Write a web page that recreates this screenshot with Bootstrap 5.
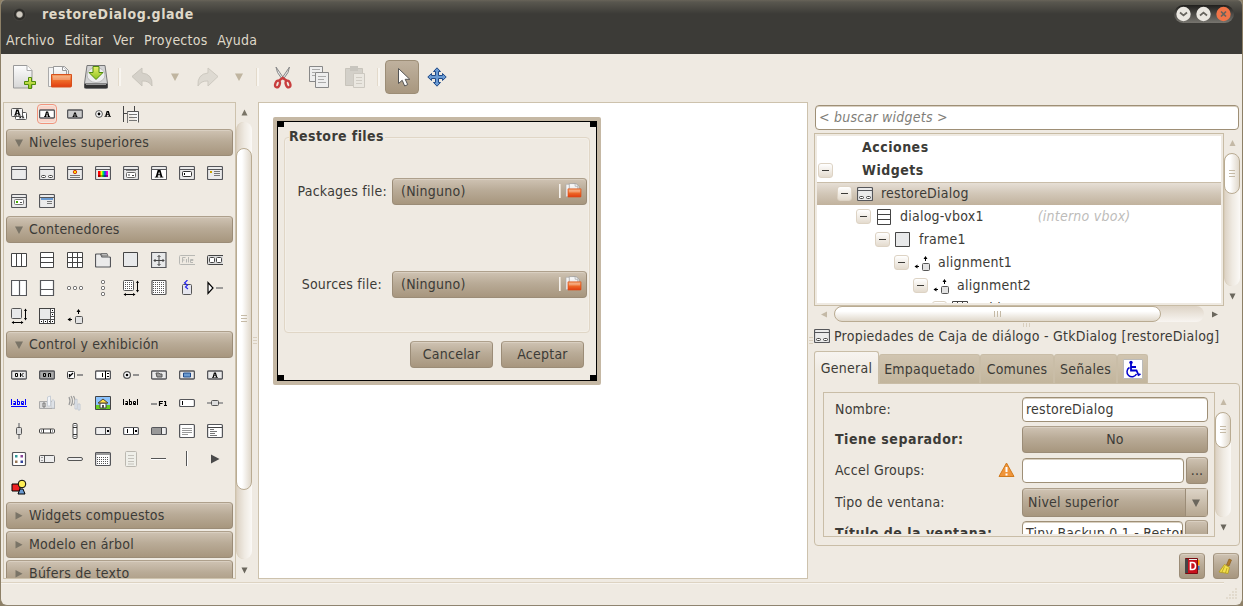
<!DOCTYPE html>
<html lang="es">
<head>
<meta charset="utf-8">
<title>restoreDialog.glade</title>
<link rel="stylesheet" href="https://cdn.jsdelivr.net/npm/bootstrap@5.3.0/dist/css/bootstrap.min.css">
<style>
:root{--bg:#efeae2;--ink:#3c3b37;--line:#cdc2ad;--soft:#e0d6c6}
html,body{height:606px;overflow:hidden}
body{background:#8d8067;font-family:"DejaVu Sans Condensed","DejaVu Sans",sans-serif;font-stretch:condensed;font-size:14px;line-height:20px;letter-spacing:.24px;color:var(--ink);white-space:nowrap}
svg{display:block;flex:none}
.fw-bold{letter-spacing:.5px}
.win{width:1243px;height:606px;background:var(--bg);border:1px solid #8d8067;border-top:0;border-bottom:1px solid #8f8470;border-radius:5px 5px 7px 7px;overflow:hidden}
.titlebar{height:28px;background:linear-gradient(#686459 0,#59574f 2px,#4b4943 8px,#3c3b37 14px);color:#dfd8c8;font-weight:700;letter-spacing:.56px;padding-left:12px}
.dot{width:13px;height:13px;border-radius:50%;background:radial-gradient(circle,#cfcac0 0 2.6px,#33322e 3.8px,#2c2b28 5px,#55534d 7px)}
.titlebar .name{margin-left:16px}
.winbtns{width:60px;height:18px;margin-right:8px;border-radius:9px;background:linear-gradient(#201f1d,#77756f)}
.menubar{height:26px;background:#3c3b37;color:#dfd8c8;padding:0 0 2px 5px;gap:9.8px}
.toolbar{height:48px;padding:0 0 2px 5px}
.tool{width:36px;height:36px}
.tsep{width:3px;height:18px;background:linear-gradient(90deg,#e3dacb 1px,#f8f5f0 1px)}
.tool.on{width:34px;height:34px;border:1px solid #9c8d76;border-radius:4px;background:linear-gradient(#bfb19e,#a8977f)}
.work{height:477px;padding-left:2px}
.palette{width:233px;height:477px;border:1px solid var(--line);overflow:hidden}
.group-head,.gbtn{background:linear-gradient(#cfc3b3,#b9ab97 45%,#a7967e);border:1px solid #9b8c77;border-top-color:#aea08c;border-radius:4px;box-shadow:inset 0 1px 0 #d9cfc1}
.group-head{height:27px;margin:0 2px 2px 2px;padding-left:8px}
.group-head svg{margin-right:6px}
.group-head span,.gtab,.lab,.ttext{padding-bottom:2px}
.icons{padding:1px 0 1px 1px}
.icons .cell{width:28px;height:28px}
.cell.sel i{outline:1px solid #f2937c;outline-offset:1px;background:#f9d5ca;border-radius:2px}
.sb{width:16px}
.trough{width:16px;border-radius:8px;background:linear-gradient(90deg,#ddd3c5,#efeae2 50%,#fbf9f6);border-left:1px solid #d8ccb9}
.thumb{width:16px;margin-left:-1px;border:1px solid #b9ab92;border-radius:8px;background:linear-gradient(90deg,#fff 35%,#e0d8cb)}
.canvas{width:550px;height:477px;border:1px solid var(--line);background:#fff;padding:14px}
.dlg{width:328px;height:268px;border:4px solid #c5b8a4;border-radius:2px;position:relative}
.dlgin{width:320px;height:260px;border:1px solid #000;background:var(--bg);padding:15px 0 0 6px}
.hnd{position:absolute;width:7px;height:6px;background:#000}
.gframe{width:306px;height:196px;border:1px solid var(--soft);border-radius:4px;padding:0 2px 0 0;box-shadow:inset 0 0 0 1px #f3efe8}
.legend-t{margin:-12px 0 0 4px;height:20px;line-height:20px;width:96px;background:var(--bg);font-weight:700;letter-spacing:.4px}
.flab{padding-bottom:2px}
.fbtn{width:195px;height:27px;padding:0 4px 2px 8px}
.fsep{width:2px;height:14px;background:linear-gradient(90deg,#fff,#d8cbb8);margin-right:4px}
.dbtn{width:83px;height:27px;padding-bottom:1px}
.side{width:427px;margin-left:4px}
.gentry{background:#fff;border:1px solid #9e8f76;border-radius:4px;box-shadow:inset 0 1px 0 #d9d0c1}
.search{height:25px;width:424px;margin:3px 0 0 2px;padding:1px 3px;color:#807e79;font-style:italic}
.treebox{width:410px;height:173px;border:1px solid #c8bca5;padding:2px;margin-left:1px}
.tree{height:167px;background:#fff;overflow:hidden}
.trow{height:23px;padding-left:1px}
.trow.cur{background:linear-gradient(#e8e1d8,#d2c7b8 50%,#c1b29d);box-shadow:inset 0 1px 0 #c9bda9}
.exp{width:15px;height:15px;border:1px solid #ddd3c4;border-radius:3px;background:linear-gradient(#fff,#e4dbce)}
.exp:after{content:"";display:block;width:7px;height:1px;margin:6px 3px;background:#3c3b37}
.ticon{width:16px;margin:0 8px 0 5px}
.htrough{width:370px;height:16px;border-radius:8px;background:linear-gradient(#ddd3c5,#f8f5f1)}
.hthumb{width:327px;height:16px;border:1px solid #b9ab92;border-radius:8px;background:linear-gradient(#fff 30%,#e0d8cb)}
.tabs{height:33px;margin-left:1px}
.gtab{height:30px;border:1px solid #c9bda7;border-bottom:0;border-radius:3px 3px 0 0;background:linear-gradient(#d0c4b0,#c2b59c)}
.gtab.act{height:33px;width:65px;padding-bottom:0;background:linear-gradient(#f7f4f0,#efeae2 60%);position:relative;z-index:1}
.book{width:426px;height:163px;margin:-1px 0 0 1px;border:1px solid #c9bda7;border-radius:0 4px 4px 4px;padding:8px 0 0 8px}
.propbox{width:392px;height:145px;border:1px solid #c9bda7;overflow:hidden}
.props{height:141px;overflow:hidden;padding:4px 0 0 11px}
.lab{width:187px}
.tb{width:26px;height:26px}
</style>
</head>
<body>
<svg width="0" height="0" class="position-absolute" aria-hidden="true">
<defs>
<linearGradient id="gp" x2="0" y2="1"><stop stop-color="#fdfdfd"/><stop offset="1" stop-color="#d6d6d6"/></linearGradient>
<linearGradient id="go" x2="0" y2="1"><stop stop-color="#f3a36a"/><stop offset=".5" stop-color="#ee6a28"/><stop offset="1" stop-color="#e03c10"/></linearGradient>
<linearGradient id="gg" x2="0" y2="1"><stop stop-color="#e8f06a"/><stop offset="1" stop-color="#8cc21c"/></linearGradient>
<linearGradient id="gr" x2="1" y2="0"><stop offset=".15" stop-color="#f00"/><stop offset=".35" stop-color="#ff0"/><stop offset=".5" stop-color="#0f4"/><stop offset=".7" stop-color="#04f"/><stop offset=".9" stop-color="#f0c"/></linearGradient>
<linearGradient id="gl" x2="0" y2="1"><stop stop-color="#000" stop-opacity=".25"/><stop offset="1" stop-color="#fff" stop-opacity=".6"/></linearGradient>
<pattern id="dots" width="2" height="2" patternUnits="userSpaceOnUse"><path fill="#555" d="M0 0h1v1H0z"/></pattern>
<g id="frm"><rect x=".5" y="1.5" width="15" height="13" rx="1" fill="#ebebeb" stroke="#55565a" stroke-width="1.2"/><path d="M1 4.500h14" stroke="#55565a"/></g>
<g id="btn"><rect x=".6" y="4" width="14.800" height="8" rx="1" fill="#eaeaea" stroke="#55565a" stroke-width="1.300"/></g>
<path id="bigA" d="M0 8V7h1l2-7h3l2 7h1v1H5V7h1L5.600 5.500H3.300L3 7h1v1zM3.600 4.500h1.800L4.500 1.500z" fill="#000" fill-rule="evenodd"/>
<symbol id="pg2" viewBox="0 0 16 16"><rect x="4.500" y="6.500" width="11" height="7" rx="1" fill="#fff" stroke="#555"/><use href="#bigA" transform="translate(8 7.500) scale(.6)"/><rect x=".5" y="2.500" width="11" height="8" rx="1" fill="#f4f4f4" stroke="#555"/><use href="#bigA" transform="translate(3 3.500) scale(.75)"/></symbol>
<symbol id="abtn" viewBox="0 0 16 16"><rect x=".6" y="4" width="14.800" height="8" rx="1" fill="#fff" stroke="#55565a" stroke-width="1.300"/><use href="#bigA" transform="translate(5 5.500) scale(.68)"/></symbol>
<symbol id="abtn2" viewBox="0 0 16 16"><rect x=".6" y="4" width="14.800" height="8" rx="1" fill="#ccc" stroke="#55565a" stroke-width="1.300"/><use href="#bigA" transform="translate(5.500 6.500) scale(.55)"/></symbol>
<symbol id="rad" viewBox="0 0 16 16"><circle cx="4" cy="8" r="3.400" fill="#fff" stroke="#555"/><circle cx="4" cy="8" r="1.400"/><use href="#bigA" transform="translate(9.500 5) scale(.72)"/></symbol>
<symbol id="tl" viewBox="0 0 16 18"><path d="M.5 1v16M11.500 1v5M0 8.500h4" stroke="#444" fill="none"/><path d="M4.500 6.500h11v11" fill="#f8f8f8" stroke="#555"/><path d="M4.500 6v12M6 9.500h8M6 12.500h8M6 15.500h8" stroke="#777"/></symbol>
<symbol id="w" viewBox="0 0 16 16"><use href="#frm"/></symbol>
<symbol id="wd" viewBox="0 0 16 16"><use href="#frm"/><rect x="2.500" y="10.500" width="4" height="2" rx="1" fill="#fff" stroke="#444"/><rect x="9.500" y="10.500" width="4" height="2" rx="1" fill="#fff" stroke="#444"/></symbol>
<symbol id="wa" viewBox="0 0 16 16"><use href="#frm"/><circle cx="8" cy="7" r="1.700" fill="#fd0" stroke="#d33a10"/><path d="M3 10.500h10M3 12.500h10" stroke="#777"/></symbol>
<symbol id="wc" viewBox="0 0 16 16"><use href="#frm"/><path d="M3 6h10v6H3z" fill="url(#gr)"/><path d="M3 10h10v2H3z" opacity=".35"/></symbol>
<symbol id="wf" viewBox="0 0 16 16"><use href="#frm"/><path d="M3 5.500h10" stroke="#888"/><rect x="3.500" y="7.500" width="9" height="5" rx="1" fill="#fff" stroke="#666"/><path d="M5 10h2M9 10.500h2" stroke="#444"/></symbol>
<symbol id="wA" viewBox="0 0 16 16"><use href="#frm"/><path d="M1 5h14v9H1z" fill="#fff"/><use href="#bigA" transform="translate(3.800 5) scale(.95)"/></symbol>
<symbol id="we" viewBox="0 0 16 16"><use href="#frm"/><rect x="3.500" y="6.500" width="9" height="5" rx="1" fill="#fff" stroke="#333"/><path d="M5.500 8v2" stroke="#000"/></symbol>
<symbol id="wl" viewBox="0 0 16 16"><use href="#frm"/><path d="M3 6h2v2H3z" fill="#c8a000"/><path d="M7 6.500h6M7 8.500h6M7 10.500h6" stroke="#777"/></symbol>
<symbol id="wg" viewBox="0 0 16 16"><use href="#frm"/><rect x="3.500" y="6.500" width="9" height="5" rx="1" fill="#fff" stroke="#777"/><path d="M5 8h2v2H5z" fill="#4a0"/><path d="M9 9.500h2" stroke="#555"/></symbol>
<symbol id="wb" viewBox="0 0 16 16"><use href="#frm"/><path d="M2 5h12v2H2z" fill="#6b9bd1"/><path d="M8 8.500h5M8 10.500h5" stroke="#777"/></symbol>
<symbol id="hb" viewBox="0 0 16 16"><path d="M.5 1.500h15v13H.5zM5.500 2v12M10.500 2v12" fill="#fff" stroke="#444"/></symbol>
<symbol id="vb" viewBox="0 0 16 16"><path d="M1.500.500h13v15h-13zM2 5.500h12M2 10.500h12" fill="#fff" stroke="#444"/></symbol>
<symbol id="tab" viewBox="0 0 16 16"><path d="M.5.500h15v15H.5zM5.500 1v14M10.500 1v14M1 5.500h14M1 10.500h14" fill="#fff" stroke="#444"/></symbol>
<symbol id="nb" viewBox="0 0 16 16"><path d="M.5 3q0-1 1-1h4l1.500 3h7.500q1 0 1 1v8q0 1-1 1h-13q-1 0-1-1z" fill="#ebebeb" stroke="#55565a" stroke-width="1.200"/><path d="M6 1.500h6l1 2.500H7z" fill="#bbb" stroke="#777"/></symbol>
<symbol id="fr" viewBox="0 0 16 16"><path d="M.5.500h14v14H.5z" fill="#e8e9ea" stroke="#444"/></symbol>
<symbol id="mv" viewBox="0 0 16 16"><path d="M.5.500h14.500v15H.5z" fill="#e8e9ea" stroke="#55565a" stroke-width="1.200"/><path d="M8 3.500v10M3 8.500h10M6.500 5L8 3.500 9.500 5M6.500 12L8 13.500 9.500 12M4.500 7L3 8.500 4.500 10M11.500 7L13 8.500 11.500 10" fill="none" stroke="#444"/></symbol>
<symbol id="file" viewBox="0 0 16 16"><path d="M16 3.500H1.500q-1 0-1 1v7q0 1 1 1H16M3.500 10.500v-5h3M3.500 8h2M7.500 7v3.500M9.500 5v5.500M11 8.500h3v-1h-2.500v3H14" fill="none" stroke="#b8b8b4"/></symbol>
<symbol id="bb" viewBox="0 0 16 16"><path d="M16 3.500H1.500q-1 0-1 1v7q0 1 1 1H16" fill="#ddd" stroke="#444"/><rect x="2.500" y="5.500" width="5" height="5" rx="1" fill="#fff" stroke="#444"/><rect x="9.500" y="5.500" width="5" height="5" rx="1" fill="#fff" stroke="#444"/></symbol>
<symbol id="hp" viewBox="0 0 16 16"><path d="M.5.500h15v15H.5zM8.500 1v14" fill="#fff" stroke="#55565a" stroke-width="1.200"/></symbol>
<symbol id="vp" viewBox="0 0 16 16"><path d="M1.500.500h13v15h-13zM2 9.500h12" fill="#fff" stroke="#55565a" stroke-width="1.200"/></symbol>
<symbol id="d3" viewBox="0 0 16 16"><g fill="#fff" stroke="#555"><rect x=".5" y="6.500" width="3" height="3" rx="1"/><rect x="6.500" y="6.500" width="3" height="3" rx="1"/><rect x="12.500" y="6.500" width="3" height="3" rx="1"/></g></symbol>
<symbol id="v3" viewBox="0 0 16 16"><g fill="#fff" stroke="#555"><rect x="6.500" y=".5" width="3" height="3" rx="1"/><rect x="6.500" y="6.500" width="3" height="3" rx="1"/><rect x="6.500" y="12.500" width="3" height="3" rx="1"/></g></symbol>
<g id="arr2"><path d="M14.500 1v10M1 14.500h11" stroke="#000"/><path d="M13 3h3l-1.500-2.500zM13 10h3l-1.500 2.500zM3 13v3L.5 14.500zM10 13v3l2.500-1.500z"/></g>
<symbol id="lay" viewBox="0 0 16 16"><rect x=".5" y=".5" width="10" height="10" rx="1" fill="#fff" stroke="#555"/><path d="M2 2h7v7H2z" fill="url(#dots)"/><use href="#arr2"/></symbol>
<symbol id="fix" viewBox="0 0 16 16"><rect x="1" y=".5" width="14" height="14" rx="1" fill="#fff" stroke="#555" stroke-width="1.200"/><path d="M2 2h12v12H2z" fill="url(#dots)"/></symbol>
<symbol id="evt" viewBox="0 0 16 16"><rect x="3.500" y="4.500" width="9" height="10" rx="1" fill="#e6e6ee" stroke="#555"/><path d="M8.500 0L5.500 3l3 2-2 2 2.500 2" fill="none" stroke="#22e" stroke-width="1.100"/></symbol>
<symbol id="xp" viewBox="0 0 16 16"><path d="M1 2.500v11l5-5.500z" fill="#fff" stroke="#000" stroke-width="1.200"/><path d="M9 8h7" stroke="#888" stroke-width="1.600"/></symbol>
<symbol id="vw" viewBox="0 0 16 16"><rect x=".5" y=".5" width="10" height="10" rx="1" fill="#e8e9ea" stroke="#555"/><use href="#arr2"/></symbol>
<symbol id="sw" viewBox="0 0 16 16"><rect x=".5" y=".5" width="15" height="15" fill="#fff" stroke="#444"/><path d="M1 1h10v10H1z" fill="#e8e9ea"/><path d="M11.500 1v14M1 11.500h14M4.500 12v3M8.500 12v3M12 4.500h3M12 8.500h3" stroke="#555"/><path d="M2 13h1v1H2zM6 13h1v1H6zM10 13h1v1h-1zM13 2h1v1h-1zM13 6h1v1h-1zM13 13h1v1h-1z"/></symbol>
<symbol id="al" viewBox="0 0 16 16"><rect x="8.500" y="8.500" width="7" height="7" rx="1" fill="#e2e2e2" stroke="#555"/><path d="M1 11.500h4M11.500 2v4" stroke="#000"/><path d="M9.500 4h4l-2-3zM3.500 9.500v4l-3-2z"/></symbol>
<symbol id="ok" viewBox="0 0 16 16"><use href="#btn"/><path d="M4.500 6.500h2v3h-2zM9.500 6v4M12.500 6l-2 2 2 2" fill="none" stroke="#000"/></symbol>
<symbol id="on" viewBox="0 0 16 16"><rect x=".6" y="4" width="14.800" height="8" rx="1" fill="#aaa" stroke="#55565a" stroke-width="1.300"/><path d="M4.500 6.500h2v3h-2zM9.500 10V6.500h2V10" fill="none" stroke="#000"/></symbol>
<symbol id="chk" viewBox="0 0 16 16"><rect x=".5" y="4.500" width="7" height="7" rx="1" fill="#fff" stroke="#444"/><path d="M2.500 7v2.500L6 6" fill="none" stroke="#000" stroke-width="1.300"/><path d="M10 8h6" stroke="#888" stroke-width="1.800"/></symbol>
<symbol id="spin" viewBox="0 0 16 16"><rect x=".6" y="4" width="14.800" height="8" rx="1" fill="#fff" stroke="#55565a" stroke-width="1.300"/><path d="M10.500 4v8M7.500 6v4" stroke="#000"/><path d="M12 6h2v1h-2zM12 9h2v1h-2z"/></symbol>
<symbol id="rb" viewBox="0 0 16 16"><circle cx="4" cy="8" r="3.400" fill="#fff" stroke="#555" stroke-width="1.200"/><circle cx="4" cy="8" r="1.300"/><path d="M10 8h6" stroke="#888" stroke-width="1.800"/></symbol>
<symbol id="fb" viewBox="0 0 16 16"><use href="#btn"/><path d="M5 6h3l1 1h2v3H6z" fill="#999" stroke="#555"/></symbol>
<symbol id="cb" viewBox="0 0 16 16"><use href="#btn"/><path d="M4.500 6h7v4h-7z" fill="#6b9bd1" stroke="#1d4a8c"/></symbol>
<symbol id="fnt" viewBox="0 0 16 16"><use href="#btn"/><use href="#bigA" transform="translate(5 5.500) scale(.65)"/></symbol>
<g id="lbl"><path d="M.5 4v6M2.500 6.500h2V10M4.500 8.500h-2v1h2M6.500 4v6M7 6.500h1.500v3H7M10 8.500h2.500v-2h-2v3h2.500M14.500 4v6" fill="none" stroke="currentColor"/></g>
<symbol id="lk" viewBox="0 0 16 16"><g color="#00f"><use href="#lbl"/><path d="M0 11.500h16" stroke="#00f"/></g></symbol>
<symbol id="lb" viewBox="0 0 16 16"><g color="#000"><use href="#lbl"/></g></symbol>
<symbol id="sc" viewBox="0 0 16 16"><path d="M.5 6.500h15v7H.5z" fill="#ddd" stroke="#aaa"/><path d="M4 8h2v4H4z" fill="none" stroke="#777"/><path d="M8.500 2l3-1v10h-3zM13 5h2v8h-2z" fill="#f3f5f8" stroke="#c8ced6"/></symbol>
<symbol id="vol" viewBox="0 0 16 16"><path d="M2 2q2 4 0 8M4 1q3 5 0 10M6.500 1q3 5 0 9" fill="none" stroke="#999" stroke-width="1.200"/><path d="M8 5l2-1v10H8zM11 9h2v6h-2z" fill="#e8ecf2" stroke="#c3c9d2"/></symbol>
<symbol id="img" viewBox="0 0 16 16"><path d="M.5 1.500h15v13H.5z" fill="#8cc4ff" stroke="#444"/><path d="M1 10h14v4H1z" fill="#6c2"/><path d="M5 8h6v5H5z" fill="#fff" stroke="#444"/><path d="M3 8l5-4 5 4z" fill="#fd4" stroke="#543"/><path d="M7 10h2v3H7z" fill="#555"/></symbol>
<symbol id="f1" viewBox="0 0 16 16"><path d="M0 9h6" stroke="#888" stroke-width="1.800"/><path d="M8.500 11V6.500H12M8.500 8.500h3M13 6.500h1.500V11M13 10.500h3" fill="none" stroke="#000" stroke-width="1.200"/></symbol>
<symbol id="ent" viewBox="0 0 16 16"><rect x=".6" y="4.500" width="14.800" height="7" rx="1" fill="#fff" stroke="#55565a" stroke-width="1.200"/><path d="M3.500 6v4" stroke="#000"/></symbol>
<symbol id="hs" viewBox="0 0 16 16"><path d="M0 8h16" stroke="#999" stroke-width="1.800"/><rect x="4.500" y="5.500" width="7" height="5" rx="1" fill="#ddd" stroke="#555"/></symbol>
<symbol id="vs" viewBox="0 0 16 16"><path d="M8 0v16" stroke="#999" stroke-width="1.800"/><rect x="5.500" y="4.500" width="5" height="7" rx="1" fill="#ddd" stroke="#555"/></symbol>
<symbol id="hsb" viewBox="0 0 16 16"><rect x=".5" y="6" width="15" height="4" rx="1" fill="#fff" stroke="#444"/><path d="M4.500 6v4M11.500 6v4M2 8h1M13 8h1" stroke="#333"/></symbol>
<symbol id="vsb" viewBox="0 0 16 16"><rect x="6" y=".5" width="4" height="15" rx="1" fill="#fff" stroke="#444"/><path d="M6 4.500h4M6 11.500h4M8 2v1M8 13v1" stroke="#333"/></symbol>
<symbol id="cmb" viewBox="0 0 16 16"><rect x=".6" y="4.500" width="14.800" height="7" rx="1" fill="#eee" stroke="#55565a" stroke-width="1.200"/><path d="M10.500 5v6" stroke="#444"/><path d="M12 7h2v2h-2z"/></symbol>
<symbol id="cme" viewBox="0 0 16 16"><rect x=".6" y="4.500" width="14.800" height="7" rx="1" fill="#fff" stroke="#55565a" stroke-width="1.200"/><path d="M10.500 5v6M4.500 6v4" stroke="#000"/><path d="M12 7h2v2h-2z"/></symbol>
<symbol id="pb" viewBox="0 0 16 16"><rect x=".6" y="4.500" width="14.800" height="7" rx="1" fill="#eee" stroke="#55565a" stroke-width="1.200"/><path d="M1 5h9v6H1z" fill="#999"/><path d="M10.500 5v6" stroke="#444"/></symbol>
<symbol id="tv" viewBox="0 0 16 16"><rect x=".6" y="1.500" width="14.800" height="13" rx="1" fill="#fff" stroke="#55565a" stroke-width="1.200"/><path d="M3 5.500h10M3 7.500h10M3 9.500h10M3 11.500h6" stroke="#999"/></symbol>
<symbol id="trv" viewBox="0 0 16 16"><rect x=".6" y="1.500" width="14.800" height="13" rx="1" fill="#fff" stroke="#55565a" stroke-width="1.200"/><path d="M1 4.500h14" stroke="#444"/><path d="M3 6.500h4M3 8.500h7M3 10.500h5M3 12.500h7" stroke="#777"/></symbol>
<symbol id="iv" viewBox="0 0 16 16"><rect x="1.500" y="1.500" width="13" height="13" rx="1" fill="#fff" stroke="#55565a" stroke-width="1.200"/><path d="M4 4h2.500v2.500H4z" fill="#399"/><path d="M9.500 4H12v2.500H9.500z" fill="#849"/><path d="M4 9.500h2.500V12H4z" fill="#975"/><path d="M9.500 9.500H12V12H9.500z" fill="#349"/></symbol>
<symbol id="hdl" viewBox="0 0 16 16"><rect x=".5" y="4.500" width="15" height="7" rx="1" fill="#eee" stroke="#555"/><path d="M5.500 5v6M3 6v1M3 9v1" stroke="#555"/></symbol>
<symbol id="stb" viewBox="0 0 16 16"><rect x=".5" y="6.500" width="15" height="3" rx="1.500" fill="#eee" stroke="#555"/></symbol>
<symbol id="cal" viewBox="0 0 16 16"><rect x=".6" y="1.500" width="14.800" height="13" rx="1" fill="#fff" stroke="#55565a" stroke-width="1.200"/><path d="M1 2h14v2H1z" fill="#999"/><path d="M2 6h12v7H2z" fill="url(#dots)"/></symbol>
<symbol id="mnu" viewBox="0 0 16 16"><rect x="2.500" y=".5" width="11" height="15" rx="1" fill="#efefe9" stroke="#bbb8b0"/><path d="M5 4.500h6M5 7.500h6M5 10.500h6M5 13h6" stroke="#c4c2bb"/></symbol>
<symbol id="hl" viewBox="0 0 16 16"><path d="M0 7.500h15" stroke="#555"/><path d="M0 8.500h15" stroke="#fff"/></symbol>
<symbol id="vl" viewBox="0 0 16 16"><path d="M7.500 0v15" stroke="#555"/><path d="M8.500 0v15" stroke="#fff"/></symbol>
<symbol id="ar" viewBox="0 0 16 16"><path d="M4 3.500v9L12.500 8z" fill="#4a4a4a"/></symbol>
<symbol id="cus" viewBox="0 0 16 16"><path d="M1 5h8v7H1z" fill="#e22" stroke="#000"/><path d="M7 15l2-5h3l2 5z" fill="#6b9bd1" stroke="#000"/><circle cx="11" cy="5" r="3.800" fill="#fe5" stroke="#000"/></symbol>
<symbol id="fold" viewBox="0 0 26 26"><path d="M1.500 3.500h6v19h-6z" fill="#f4f4f4" stroke="#aaa"/><path d="M12 2.500h5.500l4 4V12H12z" fill="#eee" stroke="#999"/><path d="M6.500 20V2.500h9l4 4V12" fill="url(#gp)" stroke="#999"/><path d="M15.500 2.500v4h4" fill="#fff" stroke="#999"/><path d="M4.500 10.500h20V22q0 1-1 1h-19z" fill="url(#go)" stroke="#d8501c"/><path d="M6 12h17v4H6z" fill="#fff" opacity=".25"/></symbol>
<symbol id="dn" viewBox="0 0 8 8"><path d="M0 .5h8L4 8z" fill="currentColor"/></symbol>
</defs></svg>

<div class="win d-flex flex-column">
  <div class="titlebar d-flex align-items-center">
    <span class="dot"></span><span class="name">restoreDialog.glade</span>
    <span class="winbtns ms-auto"><svg width="60" height="18"><g stroke-width="1"><circle cx="9.500" cy="9" r="7.200" fill="#eae7e1"/><circle cx="29.500" cy="9" r="7.200" fill="#eae7e1"/><circle cx="49.500" cy="9" r="7.200" fill="#f07448"/></g><g fill="none" stroke="#66645e" stroke-width="1.700"><path d="M6 7.500l3.500 3 3.500-3M26 10.500l3.500-3 3.500 3M47 6.500l5 5M52 6.500l-5 5"/></g></svg></span>
  </div>
  <nav class="menubar d-flex align-items-center"><span>Archivo</span><span>Editar</span><span>Ver</span><span>Proyectos</span><span>Ayuda</span></nav>

  <div class="toolbar d-flex align-items-center">
    <span class="tool d-flex align-items-center justify-content-center"><svg width="26" height="26"><path d="M2.500 1.500H16l5 5V24H2.500z" fill="url(#gp)" stroke="#999"/><path d="M16 1.500v5h5" fill="#fff" stroke="#aaa"/><path d="M17.500 13.500h3v4h4v3h-4v4h-3v-4h-4v-3h4z" fill="url(#gg)" stroke="#4e8a0c"/></svg></span>
    <span class="tool d-flex align-items-center justify-content-center"><svg width="26" height="26"><use href="#fold"/></svg></span>
    <span class="tool d-flex align-items-center justify-content-center"><svg width="26" height="26"><path d="M4 1.500h18l2.500 18v4q0 1-1 1h-21q-1 0-1-1v-4z" fill="#d4d4d4" stroke="#777"/><ellipse cx="13" cy="11" rx="9" ry="7.500" fill="#eee" stroke="#bbb"/><path d="M1.500 19.500h23V24h-23z" fill="#333"/><path d="M3 20.500h20" stroke="#999"/><path d="M10 2.500h6v6h4L13 15.500 6 8.500h4z" fill="url(#gg)" stroke="#4e8a0c"/></svg></span>
    <span class="tsep ms-1 me-2"></span>
    <span class="tool d-flex align-items-center justify-content-center" style="margin-left:-4px"><svg width="24" height="24"><path d="M1 11.500L11 3v5q11 1 10 13-3-5.500-10-5v5z" fill="#d5d1c9" stroke="#c9c5bc"/></svg></span>
    <span class="tool d-flex align-items-center justify-content-center" style="width:28px;color:#c0b5a0"><svg width="8" height="8"><use href="#dn"/></svg></span>
    <span class="tool d-flex align-items-center justify-content-center"><svg width="24" height="24"><path d="M23 11.500L13 3v5Q2 9 3 21q3-5.500 10-5v5z" fill="#dedad2" stroke="#cdc9c0"/></svg></span>
    <span class="tool d-flex align-items-center justify-content-center" style="width:27px;color:#c0b5a0"><svg width="8" height="8"><use href="#dn"/></svg></span>
    <span class="tsep mx-1"></span>
    <span class="tool d-flex align-items-center justify-content-center" style="margin-left:2px"><svg width="22" height="26"><path d="M4 3q0 5 6 12l1.500-1zM17.500 3q0 5-6 12l-1.500-1z" fill="#e4e4e4" stroke="#888"/><ellipse cx="5.500" cy="20" rx="2.200" ry="3.500" transform="rotate(20 5.500 20)" fill="none" stroke="#c83e3e" stroke-width="2.300"/><ellipse cx="16" cy="20" rx="2.200" ry="3.500" transform="rotate(-20 16 20)" fill="none" stroke="#c83e3e" stroke-width="2.300"/><path d="M7 16.500l3.700-2.500 3.800 2.500" fill="none" stroke="#c83e3e" stroke-width="2.500"/></svg></span>
    <span class="tool d-flex align-items-center justify-content-center"><svg width="24" height="26"><g fill="#eee" stroke="#888"><path d="M2.500 2.500h13v15h-13z"/><path d="M8.500 8.500h13v15h-13z"/></g><path d="M5 5.500h8M5 8.500h3M5 11.500h3M11 12.500h8M11 15.500h6M11 18.500h8" stroke="#aaa"/></svg></span>
    <span class="tool d-flex align-items-center justify-content-center"><svg width="24" height="26"><path d="M2.500 4.500h17v17h-17z" fill="#d3d0c9" stroke="#c8c4bb"/><path d="M7 2h8v5H7z" fill="#c8c5be"/><path d="M10.500 9.500h11v14h-11z" fill="#eae7e0" stroke="#ccc8c0"/><path d="M13 13.500h6M13 16.500h6M13 19.500h6" stroke="#d0ccc4"/></svg></span>
    <span class="tsep ms-1"></span>
    <span class="tool on d-flex align-items-center justify-content-center" style="margin-left:5px"><svg width="16" height="22" class="ms-1"><path d="M2.500 2.500v15l3.700-3.200 2.500 5.700 3-1.400-2.500-5.300h4.600z" fill="#fff" stroke="#555"/></svg></span>
    <span class="tool d-flex align-items-center justify-content-center"><svg width="20" height="20"><path d="M10 .8l3.500 3.700h-2V8.500h4v-2L19.200 10l-3.700 3.500v-2h-4v4h2L10 19.200l-3.500-3.700h2v-4h-4v2L.8 10l3.700-3.500v2h4v-4h-2z" fill="#6a9bd4" stroke="#204a87"/></svg></span>
  </div>

  <div class="work d-flex">
    <div class="palette">
      <div class="icons d-flex flex-wrap" style="margin-top:-4px" data-icons="pg2 *abtn abtn2 rad tl"></div>
      <div class="group-head d-flex align-items-center"><svg width="8" height="8" style="color:#7a7467"><use href="#dn"/></svg><span>Niveles superiores</span></div>
      <div class="icons d-flex flex-wrap" data-icons="w wd wa wc wf wA we wl wg wb"></div>
      <div class="group-head d-flex align-items-center"><svg width="8" height="8" style="color:#7a7467"><use href="#dn"/></svg><span>Contenedores</span></div>
      <div class="icons d-flex flex-wrap" data-icons="hb vb tab nb fr mv file bb hp vp d3 v3 lay fix evt xp vw sw al"></div>
      <div class="group-head d-flex align-items-center"><svg width="8" height="8" style="color:#7a7467"><use href="#dn"/></svg><span>Control y exhibición</span></div>
      <div class="icons d-flex flex-wrap" data-icons="ok on chk spin rb fb cb fnt lk sc vol img lb f1 ent hs vs hsb vsb cmb cme pb tv trv iv hdl stb cal mnu hl vl ar cus"></div>
      <div class="group-head d-flex align-items-center"><svg width="8" height="9"><path d="M.5 1v7.500l7-3.700z" fill="#7a7467"/></svg><span>Widgets compuestos</span></div>
      <div class="group-head d-flex align-items-center"><svg width="8" height="9"><path d="M.5 1v7.500l7-3.700z" fill="#7a7467"/></svg><span>Modelo en árbol</span></div>
      <div class="group-head d-flex align-items-center"><svg width="8" height="9"><path d="M.5 1v7.500l7-3.700z" fill="#7a7467"/></svg><span>Búfers de texto</span></div>
    </div>

    <div class="sb d-flex flex-column align-items-center">
      <svg width="16" height="20"><path d="M5.500 13.500h6l-3-6z" fill="#7a7467"/></svg>
      <div class="trough" style="height:438px;padding-top:26px"><div class="thumb d-flex align-items-center justify-content-center" style="height:342px"><svg width="6" height="8"><path d="M0 .5h6M0 3.500h6M0 6.500h6" stroke="#c5baa6"/></svg></div></div>
      <svg width="16" height="20"><path d="M5.500 8.500h6l-3 6z" fill="#6b675d"/></svg>
    </div>
    <div class="d-flex align-items-center" style="width:6px"><svg width="6" height="8"><path d="M1 .5h4M1 3.500h4M1 6.500h4" stroke="#d9cfbe"/></svg></div>

    <div class="canvas">
      <div class="dlg">
        <div class="dlgin">
          <div class="gframe">
            <div class="legend-t">Restore files</div>
            <div class="d-flex align-items-center" style="margin-top:32px"><span class="flab text-end" style="width:102px;margin-right:5px">Packages file:</span><div class="gbtn fbtn d-flex align-items-center"><span class="me-auto">(Ninguno)</span><span class="fsep"></span><svg width="17" height="17"><use href="#fold"/></svg></div></div>
            <div class="d-flex align-items-center" style="margin-top:66px"><span class="flab text-end" style="width:97px;margin-right:10px">Sources file:</span><div class="gbtn fbtn d-flex align-items-center"><span class="me-auto">(Ninguno)</span><span class="fsep"></span><svg width="17" height="17"><use href="#fold"/></svg></div></div>
          </div>
          <div class="d-flex" style="margin:8px 0 0 126px;gap:8px"><div class="gbtn dbtn d-flex align-items-center justify-content-center">Cancelar</div><div class="gbtn dbtn d-flex align-items-center justify-content-center">Aceptar</div></div>
        </div>
        <i class="hnd top-0 start-0"></i><i class="hnd top-0 end-0"></i><i class="hnd bottom-0 start-0"></i><i class="hnd bottom-0 end-0"></i>
      </div>
    </div>

    <div class="d-flex align-items-center" style="width:5px;margin-right:-4px"><svg width="5" height="8"><path d="M1 .5h4M1 3.500h4M1 6.500h4" stroke="#d9cfbe"/></svg></div>
    <div class="side d-flex flex-column">
      <div class="gentry search">&lt; buscar widgets &gt;</div>
      <div class="d-flex" style="margin-top:3px">
        <div class="treebox"><div class="tree" id="tree"></div></div>
        <div class="sb d-flex flex-column align-items-center">
          <svg width="16" height="20"><path d="M5.500 13h6l-3-6z" fill="#c4b9a6"/></svg>
          <div class="trough" style="height:133px"><div class="thumb d-flex align-items-center justify-content-center" style="height:41px"><svg width="6" height="8"><path d="M0 .5h6M0 3.500h6M0 6.500h6" stroke="#c5baa6"/></svg></div></div>
          <svg width="16" height="20"><path d="M5.500 7.500h6l-3 6z" fill="#6b675d"/></svg>
        </div>
      </div>
      <div class="d-flex" style="margin-left:1px"><svg width="20" height="16"><path d="M13 5.500v6l-6-3z" fill="#c4b9a6"/></svg><div class="htrough"><div class="hthumb d-flex align-items-center justify-content-center"><svg width="8" height="6"><path d="M.5 0v6M3.500 0v6M6.500 0v6" stroke="#c5baa6"/></svg></div></div><svg width="20" height="16"><path d="M8 5.500v6l6-3z" fill="#6b675d"/></svg></div>
      <div class="d-flex justify-content-center" style="height:5px"><svg width="8" height="5"><path d="M.5 1v4M3.500 1v4M6.500 1v4" stroke="#d9cfbe"/></svg></div>
      <div class="d-flex align-items-center" style="height:18px;margin-left:1px"><svg width="16" height="16"><use href="#wd"/></svg><span style="margin-left:4px">Propiedades de Caja de diálogo - GtkDialog [restoreDialog]</span></div>
      <div class="tabs d-flex align-items-end" style="margin-top:6px">
        <div class="gtab act d-flex align-items-center justify-content-center">General</div>
        <div class="gtab d-flex align-items-center justify-content-center" style="width:101px">Empaquetado</div>
        <div class="gtab d-flex align-items-center justify-content-center" style="width:74px">Comunes</div>
        <div class="gtab d-flex align-items-center justify-content-center" style="width:63px">Señales</div>
        <div class="gtab d-flex align-items-center justify-content-center" style="width:31px"><svg width="20" height="20"><path d="M.5.500h19v19H.5z" fill="#fff" stroke="#bbb"/><circle cx="8" cy="3.500" r="1.700" fill="#00c"/><path d="M8 5v6.500h5.500l2 4.500 2-1M8 8h5" fill="none" stroke="#00c" stroke-width="1.800"/><path d="M6.500 8.500a5 5 0 1 0 7 6.500" fill="none" stroke="#00c" stroke-width="1.500"/></svg></div>
      </div>
      <div class="book d-flex">
        <div class="propbox"><div class="props">
          <div class="d-flex align-items-center" style="height:25px"><span class="lab">Nombre:</span><div class="gentry" style="width:186px;height:25px;line-height:22px;padding-left:3px">restoreDialog</div></div>
          <div class="d-flex align-items-center" style="height:27px;margin-top:4px"><span class="lab fw-bold">Tiene separador:</span><div class="gbtn text-center" style="width:186px;height:27px;line-height:25px">No</div></div>
          <div class="d-flex align-items-center" style="height:27px;margin-top:4px"><span class="lab d-flex justify-content-between align-items-center" style="padding-right:7px">Accel Groups:<svg width="17" height="16"><path d="M8.500 1L16 14.500H1z" fill="#f0953a" stroke="#d07a1c" stroke-linejoin="round"/><path d="M8.500 5v5M8.500 11.500v2" stroke="#fff" stroke-width="2"/></svg></span><div class="gentry" style="width:162px;height:25px"></div><div class="gbtn text-center" style="width:22px;height:27px;line-height:25px;margin-left:2px">...</div></div>
          <div class="d-flex align-items-center" style="height:29px;margin-top:4px"><span class="lab">Tipo de ventana:</span><div class="gbtn d-flex align-items-center" style="width:186px;height:29px;padding-left:5px"><span class="ttext me-auto">Nivel superior</span><span class="d-flex align-items-center justify-content-center h-100" style="width:22px;padding-right:2px;border-left:1px solid #9b8c77;background:linear-gradient(#ddd4c7,#b7a892);color:#6b675d"><svg width="8" height="8"><use href="#dn"/></svg></span></div></div>
          <div class="d-flex" style="height:27px;margin-top:4px"><span class="lab fw-bold" style="padding-top:2px">Título de la ventana:</span><div class="gentry overflow-hidden" style="width:161px;height:25px;padding-left:3px;line-height:23px">Tiny Backup 0.1 - Restore files</div><div class="gbtn" style="width:23px;height:27px;margin:-1px 0 0 2px"></div></div>
        </div></div>
        <div class="sb d-flex flex-column align-items-center">
          <svg width="16" height="20"><path d="M5.500 13h6l-3-6z" fill="#c4b9a6"/></svg>
          <div class="trough" style="height:105px"><div class="thumb d-flex align-items-center justify-content-center" style="height:36px"><svg width="6" height="8"><path d="M0 .5h6M0 3.500h6M0 6.500h6" stroke="#c5baa6"/></svg></div></div>
          <svg width="16" height="20"><path d="M5.500 7.500h6l-3 6z" fill="#6b675d"/></svg>
        </div>
      </div>
      <div class="d-flex justify-content-end" style="gap:8px;margin:7px 1px 0 0">
        <div class="gbtn tb d-flex align-items-center justify-content-center"><svg width="16" height="16"><path d="M1.500.500h12v15h-12z" fill="#c8101c" stroke="#7a0a10"/><path d="M1 1h3v14H1z" fill="#444"/><path d="M5 1.500h8" stroke="#eee"/><path d="M6.500 4.500h2q3 0 3 3.500t-3 3.500h-2z" fill="none" stroke="#fff" stroke-width="1.600"/><path d="M14 2h1.500v5H14z" fill="#f90"/><path d="M14 8h1.500v4H14z" fill="#37b"/></svg></div>
        <div class="gbtn tb d-flex align-items-center justify-content-center"><svg width="16" height="16"><path d="M8.500 7L11 1l2.500 1-2.500 6z" fill="#b07a2c" stroke="#84591c" stroke-width=".6"/><path d="M6.500 6.500l5 3L10 15.500 1 14z" fill="#f4e04c" stroke="#b09a1c" stroke-width=".8"/><path d="M6.500 8.500L4 14M9 10l-1.500 5" stroke="#b09a1c" stroke-width=".8"/></svg></div>
      </div>
    </div>
  </div>

  <div class="d-flex flex-fill" style="padding-top:3px">
    <div style="width:1223px;height:2px;background:linear-gradient(#ddd3c2 1px,#f7f4ef 1px)"></div>
    <svg class="mt-auto mb-1" width="16" height="14"><path d="M12 1v2M9 4v2M12 4v2M6 7v2M9 7v2M12 7v2M3 10v2M6 10v2M9 10v2M12 10v2" stroke="#d5cbb9" stroke-width="1"/></svg>
  </div>
</div>

<script src="https://cdn.jsdelivr.net/npm/bootstrap@5.3.0/dist/js/bootstrap.bundle.min.js"></script>
<script>
const icon = (id, h = 16) => `<svg width="16" height="${h}"><use href="#${id}"/></svg>`;
document.querySelectorAll('[data-icons]').forEach(box => {
  box.innerHTML = box.dataset.icons.split(' ').map(n => {
    const sel = n[0] === '*', id = sel ? n.slice(1) : n;
    return `<div class="cell d-flex align-items-center justify-content-center ${sel ? 'sel' : ''}"><i class="d-block">${icon(id, id === 'tl' ? 18 : 16)}</i></div>`;
  }).join('');
});
const rows = [
  [0, '', 'Acciones', 'b', ''], [0, '', 'Widgets', 'b', 'e'], [1, 'wd', 'restoreDialog', 'c', 'e'],
  [2, 'vb', 'dialog-vbox1', 'i', 'e'], [3, 'fr', 'frame1', '', 'e'], [4, 'al', 'alignment1', '', 'e'],
  [5, 'al', 'alignment2', '', 'e'], [6, 'tab', 'table1', '', 'e']];
document.getElementById('tree').innerHTML = rows.map(([d, ic, t, k, e]) =>
  `<div class="trow d-flex align-items-center ${k === 'c' ? 'cur' : ''}"><span style="width:${d * 19}px"></span>
   <span class="${e ? 'exp' : ''}" style="width:15px"></span><span class="ticon">${ic ? icon(ic) : ''}</span>
   <span class="ttext ${k === 'b' ? 'fw-bold' : ''}">${t}</span>${k === 'i' ? '<span class="ttext fst-italic" style="margin-left:54px;color:#bdbcba">(interno vbox)</span>' : ''}</div>`).join('');
</script>
</body>
</html>
